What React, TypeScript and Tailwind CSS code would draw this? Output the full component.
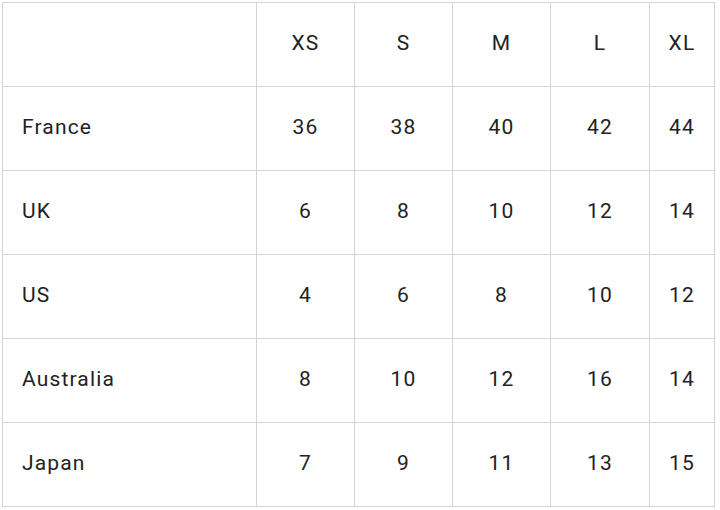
const sizes = ["XS", "S", "M", "L", "XL"];

const rows: { country: string; values: number[] }[] = [
  { country: "France", values: [36, 38, 40, 42, 44] },
  { country: "UK", values: [6, 8, 10, 12, 14] },
  { country: "US", values: [4, 6, 8, 10, 12] },
  { country: "Australia", values: [8, 10, 12, 16, 14] },
  { country: "Japan", values: [7, 9, 11, 13, 15] },
];

function Cell({ children, first }: { children?: React.ReactNode; first?: boolean }) {
  return (
    <div
      className={
        "flex h-[84px] items-center border-r border-b border-[#d4d4d4] pb-[1px] " +
        (first ? "pl-[19px]" : "justify-center")
      }
    >
      {children}
    </div>
  );
}

export default function App() {
  return (
    <div className="min-h-[510px] bg-white pl-[2px] pt-[2px] font-['Roboto',sans-serif] text-[21px] tracking-[0.055em] text-[#222]">
      <div className="grid w-fit grid-cols-[254px_98px_98px_98px_99px_65px] border-l border-t border-[#d4d4d4]">
        <Cell first />
        {sizes.map((s) => (
          <Cell key={s}>{s}</Cell>
        ))}
        {rows.map((r) => (
          <div key={r.country} className="contents">
            <Cell first>{r.country}</Cell>
            {r.values.map((v, i) => (
              <Cell key={i}>{v}</Cell>
            ))}
          </div>
        ))}
      </div>
    </div>
  );
}
